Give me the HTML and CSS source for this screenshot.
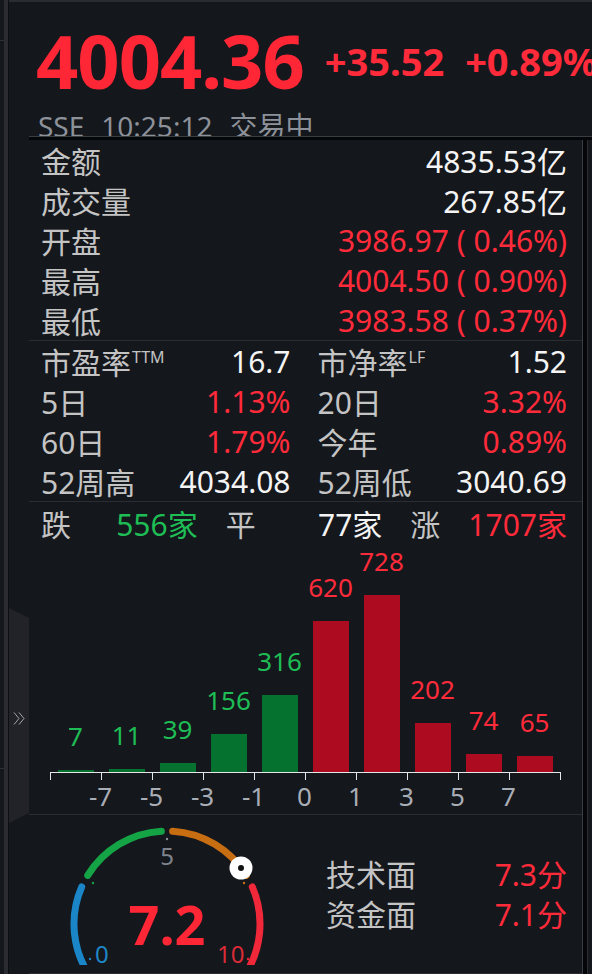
FILE: index.html
```html
<!DOCTYPE html>
<html lang="zh-CN">
<head>
    <meta charset="UTF-8">
    <meta name="viewport" content="width=device-width, initial-scale=1.0">
    <title>上证指数</title>
    <link rel="stylesheet" href="styles.css">
</head>
<body>
    <div class="app">
        <div class="gutter">
            <div class="edge">
                <div class="edge-top"></div>
                <div class="edge-mid"></div>
            </div>
            <div class="gutter-bar"></div>
        </div>

        <div class="main">
            <header class="head">
                <div class="price-row">
                    <span class="price">4004.36</span>
                    <span class="chg">+35.52</span>
                    <span class="chg">+0.89%</span>
                </div>
                <div class="meta">
                    <span>SSE</span>
                    <span>10:25:12</span>
                    <span>交易中</span>
                </div>
            </header>
            <div class="rule"></div>

            <div class="body">
                <div class="side">
                    <div class="tab">
                        <svg class="chevron" width="12" height="13" viewBox="0 0 12 13">
                            <polyline points="1,0.5 6,6.5 1,12.5" />
                            <polyline points="6,0.5 11,6.5 6,12.5" />
                        </svg>
                    </div>
                </div>

                <div class="panel">
                    <!-- quote -->
                    <section class="quote">
                        <div class="row"><span class="label">金额</span><span class="val">4835.53亿</span></div>
                        <div class="row"><span class="label">成交量</span><span class="val">267.85亿</span></div>
                        <div class="row"><span class="label">开盘</span><span class="val up">3986.97 ( 0.46%)</span></div>
                        <div class="row"><span class="label">最高</span><span class="val up">4004.50 ( 0.90%)</span></div>
                        <div class="row"><span class="label">最低</span><span class="val up">3983.58 ( 0.37%)</span></div>
                    </section>

                    <!-- ratios -->
                    <section class="ratios">
                        <div class="row"><span class="label">市盈率<sup>TTM</sup></span><span class="val">16.7</span></div>
                        <div class="row"><span class="label">市净率<sup>LF</sup></span><span class="val">1.52</span></div>
                        <div class="row"><span class="label">5日</span><span class="val up">1.13%</span></div>
                        <div class="row"><span class="label">20日</span><span class="val up">3.32%</span></div>
                        <div class="row"><span class="label">60日</span><span class="val up">1.79%</span></div>
                        <div class="row"><span class="label">今年</span><span class="val up">0.89%</span></div>
                        <div class="row"><span class="label">52周高</span><span class="val">4034.08</span></div>
                        <div class="row"><span class="label">52周低</span><span class="val">3040.69</span></div>
                    </section>

                    <!-- breadth -->
                    <section class="breadth">
                        <div class="row"><span class="label">跌</span><span class="val down">556家</span></div>
                        <div class="row"><span class="label">平</span><span class="val">77家</span></div>
                        <div class="row"><span class="label">涨</span><span class="val up">1707家</span></div>
                    </section>

                    <!-- distribution -->
                    <section class="hist">
                        <div class="plot">
                            <div class="col"><span class="num down">7</span><div class="bar bar-down" style="height: 2px"></div></div>
                            <div class="col"><span class="num down">11</span><div class="bar bar-down" style="height: 3px"></div></div>
                            <div class="col"><span class="num down">39</span><div class="bar bar-down" style="height: 9px"></div></div>
                            <div class="col"><span class="num down">156</span><div class="bar bar-down" style="height: 38px"></div></div>
                            <div class="col"><span class="num down">316</span><div class="bar bar-down" style="height: 77px"></div></div>
                            <div class="col"><span class="num up">620</span><div class="bar bar-up" style="height: 151px"></div></div>
                            <div class="col"><span class="num up">728</span><div class="bar bar-up" style="height: 177px"></div></div>
                            <div class="col"><span class="num up">202</span><div class="bar bar-up" style="height: 49px"></div></div>
                            <div class="col"><span class="num up">74</span><div class="bar bar-up" style="height: 18px"></div></div>
                            <div class="col"><span class="num up">65</span><div class="bar bar-up" style="height: 16px"></div></div>
                        </div>
                        <div class="axis">
                            <i></i><i></i><i></i><i></i><i></i><i></i><i></i><i></i><i></i><i></i><i></i>
                        </div>
                        <div class="xlabels">
                            <span>-7</span><span>-5</span><span>-3</span><span>-1</span><span>0</span><span>1</span><span>3</span><span>5</span><span>7</span>
                        </div>
                    </section>

                    <!-- score gauge -->
                    <section class="gauge">
                        <svg class="dial" width="220" height="150" viewBox="0 0 220 150">
                            <g fill="none" stroke-width="7" stroke-linecap="round">
                                <path d="M30.82 162.34 A93 93 0 0 1 21.71 71.92" stroke="#1a86c8" />
                                <path d="M27.71 60.41 A93 93 0 0 1 101.32 16.17" stroke="#14a446" />
                                <path d="M112.68 16.17 A93 93 0 0 1 186.29 60.41" stroke="#c86e12" />
                                <path d="M192.29 71.92 A93 93 0 0 1 183.18 162.34" stroke="#f0283a" />
                            </g>
                            <circle cx="30" cy="144" r="1.2" fill="#1a86c8" />
                            <circle cx="33" cy="68" r="1.2" fill="#14a446" />
                            <circle cx="107" cy="24" r="1.2" fill="#8a8e96" />
                            <circle cx="184" cy="68" r="1.2" fill="#c86e12" />
                            <circle cx="188" cy="144" r="1.2" fill="#f0283a" />
                            <text x="107" y="50" class="tick-5">5</text>
                            <text x="35" y="148" class="tick-0">0</text>
                            <text x="157" y="148" class="tick-10">10</text>
                            <text x="107" y="130" class="score">7.2</text>
                            <circle cx="181" cy="53" r="11.5" fill="#ffffff" />
                            <circle cx="181" cy="53" r="3" fill="#111111" />
                        </svg>
                        <div class="scores">
                            <div class="row"><span class="label">技术面</span><span class="val up">7.3分</span></div>
                            <div class="row"><span class="label">资金面</span><span class="val up">7.1分</span></div>
                        </div>
                    </section>
                </div>

                <div class="rail"></div>
            </div>
        </div>
    </div>
</body>
</html>
```

FILE: styles.css
```css
* {
    box-sizing: border-box;
}
body {
    margin: 0;
    width: 592px;
    height: 974px;
    overflow: hidden;
    background-color: #14171c;
    font-family: 'Noto Sans', 'Noto Sans CJK SC', sans-serif;
    color: #f2f2f2;
}
.app {
    display: flex;
    height: 974px;
}

/* left window edge */
.gutter {
    display: flex;
    width: 9px;
    flex-shrink: 0;
}
.edge {
    width: 4px;
}
.edge-top {
    height: 41px;
    border-bottom: 1px solid #2e3035;
}
.edge-mid {
    height: 728px;
    border-bottom: 1px solid #2e3035;
}
.gutter-bar {
    width: 5px;
    background-color: #2b2c31;
    border-right: 1px solid #0d0e11;
}

.main {
    flex: 1;
    display: flex;
    flex-direction: column;
    min-width: 0;
}

/* header */
.head {
    height: 136px;
    overflow: hidden;
    border-top: 2px solid #2a2c31;
    padding-left: 27px;
    white-space: nowrap;
}
.price-row {
    display: flex;
    align-items: center;
    gap: 21px;
    height: 90px;
    margin-top: 14px;
}
.price {
    font-size: 74px;
    line-height: 74px;
    font-weight: 700;
    letter-spacing: -1px;
    color: #ff2636;
}
.chg {
    font-size: 38px;
    line-height: 40px;
    font-weight: 700;
    color: #ff2b3b;
}
.meta {
    display: flex;
    gap: 17px;
    margin-top: 6px;
    padding-left: 2px;
    font-size: 28px;
    line-height: 28px;
    color: #8d9199;
}
.rule {
    margin-left: 20px;
    height: 4px;
    border-top: 1px solid #3a3d44;
    background-color: #050608;
}

.body {
    display: flex;
    height: 834px;
}

/* collapse tab */
.side {
    width: 20px;
    flex-shrink: 0;
    padding-top: 468px;
}
.tab {
    height: 215px;
    background-color: #222328;
    clip-path: polygon(0 0, 100% 10px, 100% 205px, 0 100%);
    padding: 100px 0 0 4px;
}
.chevron polyline {
    fill: none;
    stroke: #a2a4a9;
    stroke-width: 1;
}

.panel {
    width: 553px;
    flex-shrink: 0;
}
.rail {
    width: 6px;
    border-left: 1px solid #3a3d44;
    border-right: 1px solid #2b2c31;
    background-color: #050608;
}

.row {
    display: flex;
    justify-content: space-between;
    align-items: center;
    white-space: nowrap;
}
.label {
    color: #c4c4c4;
}
.val {
    color: #f4f4f4;
}
.up {
    color: #ff2b3b;
}
.down {
    color: #1fbd55;
}

.quote,
.ratios,
.breadth {
    padding: 0 15px 0 12px;
    font-size: 30px;
    border-bottom: 1px solid #2a2d33;
}
.quote .row,
.ratios .row {
    height: 40px;
}
.ratios {
    display: grid;
    grid-template-columns: 1fr 1fr;
    column-gap: 27px;
}
.label sup {
    font-size: 16px;
    vertical-align: 11px;
    line-height: 0;
    margin-left: 1px;
}
.breadth {
    display: grid;
    grid-template-columns: 1fr 1fr 1fr;
    column-gap: 28px;
    border-bottom: none;
}
.breadth .row {
    height: 42px;
}

/* distribution chart */
.hist {
    padding: 0 0 3px 21px;
    border-bottom: 1px solid #2a2d33;
}
.plot {
    display: flex;
    align-items: flex-end;
    height: 228px;
}
.col {
    width: 51px;
    display: flex;
    flex-direction: column;
    align-items: center;
}
.num {
    font-size: 26px;
    line-height: 26px;
    margin-bottom: 21px;
}
.bar {
    width: 36px;
}
.bar-down {
    background-color: #05732f;
}
.bar-up {
    background-color: #ad0b1f;
}
.axis {
    display: flex;
    justify-content: space-between;
    width: 511px;
    height: 8px;
    border-top: 1px solid #e6e6e6;
}
.axis i {
    width: 1px;
    height: 7px;
    background-color: #e6e6e6;
}
.xlabels {
    display: flex;
    margin: 1px 0 0 25px;
    font-size: 26px;
    line-height: 30px;
    color: #a9adb5;
}
.xlabels span {
    width: 51px;
    text-align: center;
}

/* score gauge */
.gauge {
    display: flex;
    height: 159px;
    border-bottom: 1px solid #2a2d33;
}
.dial {
    display: block;
    margin-left: 31px;
    flex-shrink: 0;
}
.dial text {
    font-family: 'Noto Sans', sans-serif;
}
.tick-5 {
    font-size: 24px;
    fill: #80848c;
    text-anchor: middle;
}
.tick-0 {
    font-size: 24px;
    fill: #1e86c6;
}
.tick-10 {
    font-size: 24px;
    fill: #d92b38;
}
.score {
    font-size: 54px;
    font-weight: 700;
    fill: #ff2636;
    text-anchor: middle;
}
.scores {
    flex: 1;
    margin-left: 46px;
    padding: 38px 15px 0 0;
    font-size: 30px;
}
.scores .row {
    height: 40px;
}
```
